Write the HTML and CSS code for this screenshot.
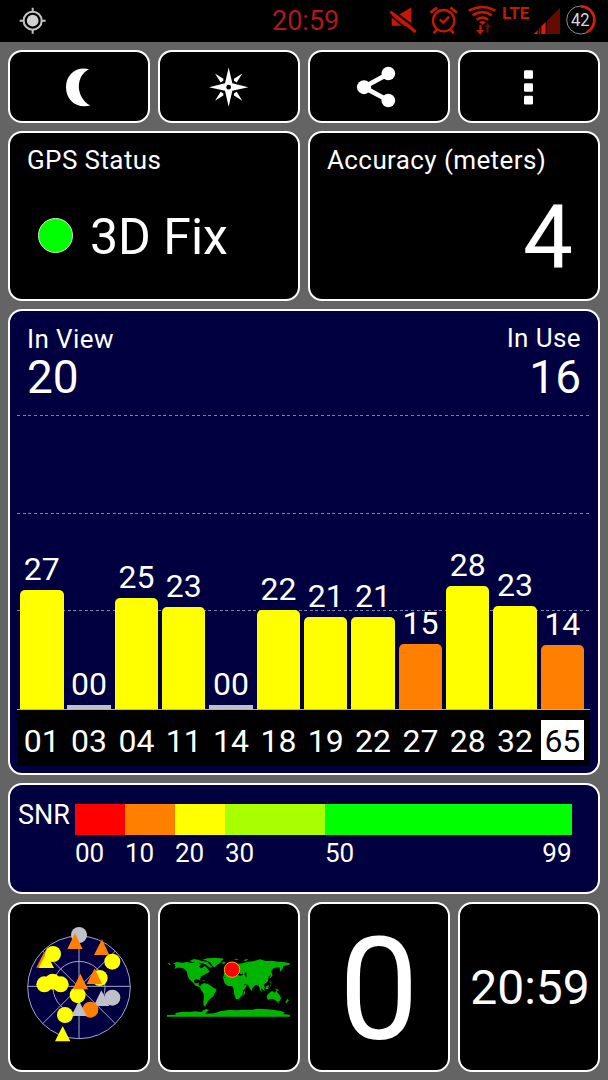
FILE: index.html
```html
<!DOCTYPE html>
<html lang="en">
<head>
    <meta charset="UTF-8">
    <title>GPS Status</title>
    <link rel="stylesheet" href="styles.css">
</head>
<body>
    <header class="statusbar">
        <svg class="gps-icon" width="42" height="42" viewBox="36 0 126 126">
            <circle cx="98" cy="62" r="27" fill="none" stroke="#c4c4c4" stroke-width="6"/>
            <circle cx="98" cy="62" r="17.5" fill="#d0d0d0"/>
            <path d="M98 23v12M98 89v12M59 62h12M125 62h12" stroke="#c4c4c4" stroke-width="6"/>
        </svg>
        <div class="clock">20:59</div>
        <div class="icons">
            <svg width="36" height="42" viewBox="252 0 108 126">
                <path d="M263 43h24l35-21v62l-9-5-28-2h-22z" fill="#c41800"/>
                <path d="M268 33l74 56" stroke="#000" stroke-width="6"/>
                <path d="M256 43l68 58" stroke="#000" stroke-width="5"/>
                <path d="M259 35l76 61" stroke="#c41800" stroke-width="9"/>
            </svg>
            <svg width="40" height="42" viewBox="360 0 120 126">
                <g fill="none" stroke="#c41800" stroke-width="7">
                    <circle cx="419" cy="62" r="32"/>
                    <path d="M379 38l20-15M459 38l-20-15M398 89l-9 11M440 89l9 11" stroke-width="8"/>
                    <path d="M407 58l11 10 17-18"/>
                </g>
            </svg>
            <svg width="35" height="42" viewBox="480 0 105 126">
                <g fill="none" stroke="#c41800" stroke-width="8">
                    <path d="M494 32q42-22 80 0"/>
                    <path d="M506 46q29-19 57 0"/>
                    <path d="M518 59q17-12 34 0"/>
                </g>
                <path d="M525 66q10-6 21 0l-10 9z" fill="#c41800"/>
                <path d="M526 76h7v14h7l-11 14-13-14h10z" fill="#c41800"/>
                <path d="M547 98v-16h-6l10-13 10 13h-7v16z" fill="#650a00"/>
            </svg>
            <div class="lte">LTE</div>
            <svg width="31" height="42" viewBox="684 0 93 126">
                <path d="M728 102v-39l40-40v79z" fill="#650a00"/>
                <path d="M689 102l12-11v11z" fill="#e01c08"/>
                <path d="M704 102v-15l5-5v20z" fill="#8c1004"/>
                <path d="M712 102v-23l13-13v36z" fill="#e01c08"/>
            </svg>
            <svg width="45" height="42" viewBox="777 0 135 126">
                <circle cx="830" cy="60" r="42" fill="none" stroke="#8c8c8c" stroke-width="3"/>
                <path d="M830 19a41 41 0 0 1 18 78" fill="none" stroke="#d81c10" stroke-width="8"/>
                <text x="829" y="79" class="battery-text" textLength="56" lengthAdjust="spacingAndGlyphs">42</text>
            </svg>
        </div>
    </header>

    <main class="dashboard">
        <button class="card tool">
            <svg width="48" height="48" viewBox="165 187.5 144 144">
                <path d="M267 206c-42 22-40 84 4 109c-43 10-73-17-73-55s31-63 69-54z" fill="#fff"/>
            </svg>
        </button>
        <button class="card tool">
            <svg width="48" height="48" viewBox="615 187.5 144 144">
                <path d="M686 201l11 47 48 12-48 11-11 48-11-48-48-11 48-12z" fill="#fff"/>
                <path d="M645 219l25 16v6l-8 5zM727 219l-25 16v6l8 5zM645 301l25-16v-6l-8-5zM727 301l-25-16v-6l8-5z" fill="#fff"/>
                <circle cx="686" cy="260" r="7"/>
            </svg>
        </button>
        <button class="card tool">
            <svg width="48" height="48" viewBox="153 187.5 144 144">
                <path d="M253 220l-74 40 74 40" fill="none" stroke="#fff" stroke-width="14"/>
                <g fill="#fff">
                    <circle cx="253" cy="219" r="20.5"/>
                    <circle cx="180" cy="260" r="21"/>
                    <circle cx="253" cy="300" r="20.5"/>
                </g>
            </svg>
        </button>
        <button class="card tool">
            <svg width="48" height="48" viewBox="603 187.5 144 144">
                <g fill="#fff">
                    <rect x="660" y="209" width="27" height="26" rx="4"/>
                    <rect x="660" y="248" width="27" height="26" rx="4"/>
                    <rect x="660" y="286" width="27" height="26" rx="4"/>
                </g>
            </svg>
        </button>

        <section class="card half">
            <h2>GPS Status</h2>
            <div class="fix"><span class="led"></span>3D Fix</div>
        </section>
        <section class="card half">
            <h2>Accuracy (meters)</h2>
            <div class="accuracy">4</div>
        </section>

        <section class="card full satellites">
            <div class="counts">
                <div class="count">
                    <h2>In View</h2>
                    <div class="num">20</div>
                </div>
                <div class="count right">
                    <h2>In Use</h2>
                    <div class="num">16</div>
                </div>
            </div>
            <div class="chart">
                <div class="col">27<div class="bar" style="height: 119.5px"></div></div>
                <div class="col">00<div class="bar none" style="height: 4.5px"></div></div>
                <div class="col">25<div class="bar" style="height: 111px"></div></div>
                <div class="col">23<div class="bar" style="height: 102.5px"></div></div>
                <div class="col">00<div class="bar none" style="height: 4.5px"></div></div>
                <div class="col">22<div class="bar" style="height: 99px"></div></div>
                <div class="col">21<div class="bar" style="height: 92px"></div></div>
                <div class="col">21<div class="bar" style="height: 92.5px"></div></div>
                <div class="col">15<div class="bar low" style="height: 65px"></div></div>
                <div class="col">28<div class="bar" style="height: 123px"></div></div>
                <div class="col">23<div class="bar" style="height: 103px"></div></div>
                <div class="col">14<div class="bar low" style="height: 64px"></div></div>
            </div>
            <div class="ids">
                <span>01</span>
                <span>03</span>
                <span>04</span>
                <span>11</span>
                <span>14</span>
                <span>18</span>
                <span>19</span>
                <span>22</span>
                <span>27</span>
                <span>28</span>
                <span>32</span>
                <span class="selected">65</span>
            </div>
        </section>

        <section class="card full snr">
            <div class="snr-label">SNR</div>
            <div class="scale">
                <div class="c-red"></div>
                <div class="c-orange"></div>
                <div class="c-yellow"></div>
                <div class="c-lime"></div>
                <div class="c-green"></div>
                <span>00</span>
                <span>10</span>
                <span>20</span>
                <span>30</span>
                <span class="ends">50<b>99</b></span>
            </div>
        </section>

        <section class="card tile">
            <svg width="138" height="166" viewBox="30 27 414 498">
                <g fill="none" stroke="#a4a4c8" stroke-width="3">
                    <circle cx="237" cy="277" r="154" fill="#000040"/>
                    <circle cx="237" cy="277" r="78"/>
                    <path d="M128 168l218 218M346 168L128 386M237 123v308"/>
                    <path d="M83 274h308"/>
                </g>
                <g fill="#c0c0c8">
                    <circle cx="237" cy="120" r="24"/>
                    <circle cx="337" cy="308" r="24"/>
                    <path d="M304 286l24 47h-47z"/>
                </g>
                <g fill="#ff8000">
                    <path d="M225 115l23 47h-46zM306 133l22 47h-46zM132 172l23 46h-46z"/>
                    <circle cx="271" cy="344" r="24"/>
                </g>
                <path d="M237 317l23 46h-46z" fill="#c0c0c8"/>
                <g fill="#ff0">
                    <circle cx="159" cy="177" r="24"/>
                    <path d="M139 173l23 46h-46z"/>
                    <circle cx="337" cy="200" r="24"/>
                    <circle cx="299" cy="249" r="24"/>
                    <circle cx="133" cy="268" r="24"/>
                    <circle cx="158" cy="260" r="24"/>
                    <circle cx="182" cy="268" r="24"/>
                    <circle cx="233" cy="300" r="24"/>
                    <circle cx="195" cy="360" r="24"/>
                    <path d="M188 393l23 46h-46z"/>
                </g>
                <path d="M284 220l22 47h-46zM241 236l23 47h-46z" fill="#ff8000"/>
            </svg>
        </section>
        <section class="card tile">
            <svg width="138" height="166" viewBox="15 -93 414 498">
                <g fill="#00b400">
                    <!-- americas -->
                    <path d="M53 86l12-5 18 2 12-2 17 3 10-4 16 7-6 8 8 5 9-8 9 9 6 9-11 6-8 5-7 3-4 11-10-3-7 4 2 9 8 0 4-3 0 8 7 5 5 4 8-1 3 4-9-1-10-4-13-5-10-11-8-7-6-11-2-13-9-9-9-3-11 0-9 4 4-8-4-3 4-3z"/>
                    <path d="M103 78l14-6 13 2 10 4 17 3 8 9 8 7-8 1-11-9-13-5-18-1zM141 75l16-5 24-1 20 1 5 3-7 5-4 7-10 5-6 7-8-5-4-9-12-6z"/>
                    <path d="M138 149l9-5 12 3 9 6 7 5 9 4 0 5-5 7-3 9-9 7-8 9-5 9-3 4 2 3-7-2-1-12 2-16-2-10-7-9-3-9z"/>
                    <path d="M127 128l7-3 4 4M138 134l14 3-3 2z"/>
                    <!-- europe and asia -->
                    <path d="M206 122l1-9 9-3 10-22 14-5 12 3 14-2 12-4 16-1 22-6 16 5 18-1 20 3 16 1 19 4-3 5-17 3-3 9-6 9-2-14-18 2-7 8 1 12-9 5-1 9-2 7-7 5-5 5 4 8-4 7-5-7-3 5 3 9-6-6-3-12-7-5-7 4-6 7-3 9-6-11-4-8-10-3-4 7-12 7-8-15 2-8-8-1-7-3-7-5-5 2-9-6-8 7z"/>
                    <path d="M210 94l4-2 3 10-8 2 3-4zM199 83l7-3 6 3-5 4zM235 75l10-4 6 3zM265 76l16-5-8 7zM349 112l4 9-6 8-5 1 5-6zM267 73l7-2v2z"/>
                    <!-- africa -->
                    <path d="M205 130l8-4 13-1 6 5 11 0 12 0 4 11 8 10 8-1-3 8-8 9-1 13-7 7-5 6-8 0-5-12-2-18-5-10-13 0-9-8-3-8zM267 170l4-2-2 10-5 3z"/>
                    <!-- oceania -->
                    <path d="M337 179l7-6 7-5 5 2 4 3 4-7 4 7 6 8 4 8-3 8-7 4-7-5-10-5-12 4-4-8zM318 152l7 8 5 8-4-1-9-12zM332 155l10-5-3 12-7 0zM358 160l15 5-5 3zM334 168l14 3-2 1zM344 148l5 3-3 2zM397 191l5 5-8 9-3-2zM345 136l4 9-5-3zM370 201l4 1-3 4z"/>
                    <!-- antarctica -->
                    <path d="M36 245v-5l26-1-1-5 21-4 22 1 16-2 20 2 5-5 8-4 10 3-8 5-3 6 27-1 18-7 24-3 24 1 22-2 24 0 17-3 31 2 36 4 14 5-4 5 20 3v5z"/>
                    <path d="M37 85l8 0 2 6-4-2z"/>
                </g>
                <path d="M248 119l5-5 5 4 5-2 1 4-10 2zM268 117l3-5 4 1-1 6 2 6-4-1z"/>
                <circle cx="231" cy="104" r="23" fill="#f00" stroke="#ffa020" stroke-width="3"/>
            </svg>
        </section>
        <section class="card tile speed">0</section>
        <section class="card tile time">20:59</section>
    </main>
</body>
</html>
```
FILE: styles.css
```css
* {
    box-sizing: border-box;
}
body {
    font-family: Roboto, "Liberation Sans", sans-serif;
    background: #646464;
    color: #fff;
    margin: 0;
}
svg {
    display: block;
    flex-shrink: 0;
}
h2 {
    margin: 0;
    font-size: 26px;
    font-weight: 400;
    letter-spacing: 0.4px;
    line-height: 32px;
}

/* status bar */
.statusbar {
    height: 42px;
    background: #000;
    display: flex;
    padding-left: 12px;
}
.clock {
    margin-left: 218px;
    font-size: 27px;
    line-height: 42px;
    color: #b01818;
}
.icons {
    margin-left: auto;
    display: flex;
}
.lte {
    width: 33px;
    padding-left: 3px;
    font-size: 17px;
    font-weight: 700;
    line-height: 26px;
    color: #c41800;
}
.battery-text {
    font-size: 54px;
    fill: #d8d8d8;
    text-anchor: middle;
}

/* cards */
.dashboard {
    display: grid;
    grid-template-columns: repeat(4, 142px);
    grid-template-rows: 73px 170px 466px 111px 170px;
    gap: 8px;
    padding: 8px;
}
.card {
    background: #000;
    color: #fff;
    border: 2px solid #fff;
    border-radius: 14px;
    padding: 0;
    font-family: inherit;
}
.tool, .tile {
    display: flex;
    align-items: center;
    justify-content: center;
}
.half {
    grid-column: span 2;
    padding: 11px 25px 0 17px;
}
.full {
    grid-column: span 4;
    background: #000040;
}
.fix {
    display: flex;
    align-items: center;
    margin-top: 31px;
    padding-left: 11px;
    font-size: 50px;
    line-height: 60px;
}
.led {
    width: 35px;
    height: 35px;
    margin: 0 17px 4px 0;
    border: 1px solid #c8f0c8;
    border-radius: 50%;
    background: #0f0;
}
.accuracy {
    margin-top: 12px;
    font-size: 89px;
    line-height: 100px;
    text-align: right;
}

/* satellite chart */
.satellites {
    padding: 11px 8px 0 7px;
}
.counts {
    display: flex;
    justify-content: space-between;
    height: 93px;
    padding: 0 9px 0 10px;
}
.count h2 {
    line-height: 34px;
}
.right {
    text-align: right;
}
.count.right h2 {
    line-height: 32px;
    margin-bottom: 2px;
}
.num {
    font-size: 46px;
    line-height: 43px;
}
.chart {
    display: grid;
    grid-template-columns: repeat(12, 43.5px);
    column-gap: 3.83px;
    align-items: end;
    height: 295px;
    padding-left: 3px;
    border-bottom: 1px solid #b0b0b0;
    background:
        repeating-linear-gradient(90deg, #8080b0 0 3px, transparent 3px 5.63px) 0 0 / 100% 1px no-repeat,
        repeating-linear-gradient(90deg, #8080b0 0 3px, transparent 3px 5.63px) 0 98px / 100% 1px no-repeat,
        repeating-linear-gradient(90deg, #8080b0 0 3px, transparent 3px 5.63px) 0 195px / 100% 1px no-repeat;
}
.col {
    font-size: 32px;
    line-height: 42px;
    text-align: center;
}
.bar {
    background: #ff0;
    border-radius: 5px 5px 0 0;
}
.bar.low {
    background: #ff8000;
}
.bar.none {
    background: #c0c0c8;
    border-radius: 0;
}
.ids {
    display: grid;
    grid-template-columns: repeat(12, 43.5px);
    column-gap: 3.83px;
    height: 56px;
    padding: 10px 0 0 3px;
    background: #000;
    font-size: 32px;
    line-height: 42px;
    text-align: center;
}
.selected {
    height: 40px;
    background: #fff;
    color: #000;
}

/* snr scale */
.snr {
    display: flex;
    padding: 19px 0 0 8px;
}
.snr-label {
    width: 57px;
    font-size: 27px;
    line-height: 22px;
}
.scale {
    display: grid;
    grid-template-columns: 50px 50px 50px 100px 246.5px;
    grid-template-rows: 31px 36px;
    align-content: start;
    font-size: 26px;
    line-height: 36px;
}
.c-red { background: #f00; }
.c-orange { background: #ff8000; }
.c-yellow { background: #ff0; }
.c-lime { background: #a8ff00; }
.c-green { background: #0f0; }
.ends {
    display: flex;
    justify-content: space-between;
}
.ends b {
    font-weight: 400;
}

/* bottom tiles */
.speed {
    padding-top: 8px;
    font-size: 142px;
    line-height: 158px;
}
.time {
    padding-left: 2px;
    font-size: 48px;
}
```
